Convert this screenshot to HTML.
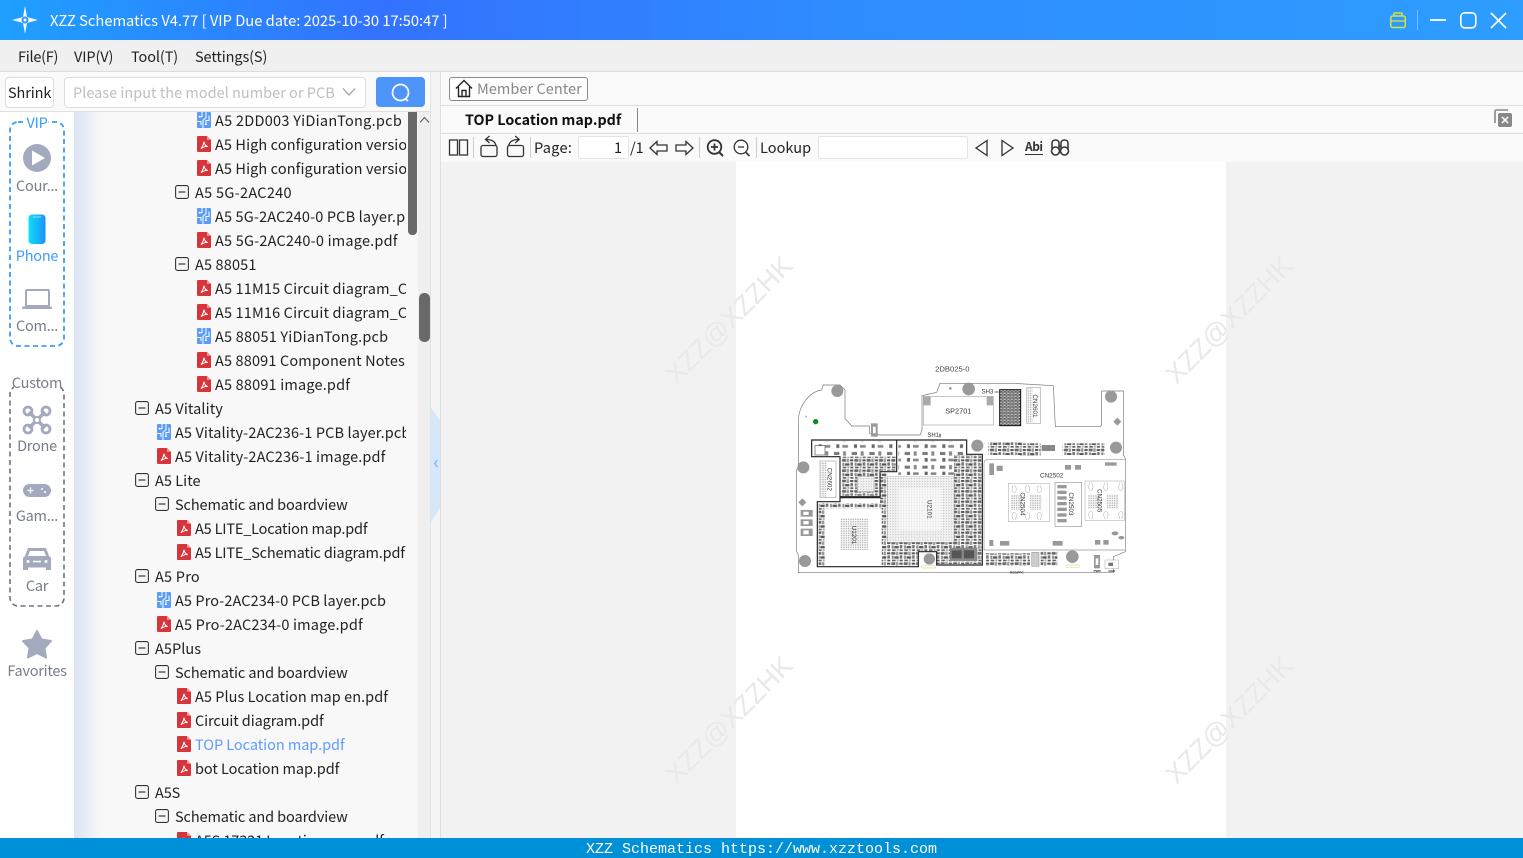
<!DOCTYPE html>
<html><head><meta charset="utf-8"><title>XZZ Schematics</title>
<style>
html,body{margin:0;padding:0;width:1523px;height:858px;overflow:hidden;background:#fff}
body{position:relative;font-family:"Noto Sans CJK SC","Liberation Sans",sans-serif;font-size:14.5px;letter-spacing:-.1px;color:#222}
.a{position:absolute}
.t{position:absolute;white-space:nowrap;line-height:20px}
#title{left:0;top:0;width:1523px;height:40px;background:linear-gradient(90deg,#1fa0ff 0,#3372ff 25%,#2f8cff 55%,#2d9dff 100%)}
#menu{left:0;top:40px;width:1523px;height:31px;background:#f0f0f0;border-bottom:1px solid #dcdcdc}
#tree{left:74px;top:112px;width:332px;height:726px;overflow:hidden;background:linear-gradient(90deg,#dbe4f3 0,#f8f8f8 28px)}
.r{position:absolute;height:24px;line-height:25px;white-space:nowrap;color:#222}
.r svg{position:absolute;top:4px;left:-18px;width:14px;height:16px}
.r svg.b{left:-20px;top:5px;width:14px;height:14px}
.lab{position:absolute;left:0;width:74px;text-align:center;color:#767c8a;line-height:20px;white-space:nowrap;letter-spacing:-.25px}
.wm{position:absolute;font-family:"Liberation Sans",sans-serif;font-size:27px;letter-spacing:0;color:#e9e9e9;white-space:nowrap;transform:translate(-50%,-50%) rotate(-45deg);line-height:34px}
</style></head><body>
<svg width="0" height="0" style="position:absolute">
<defs>
<symbol id="pdf" viewBox="0 0 14 17" preserveAspectRatio="none"><path d="M1 0H10L14 4V16a1 1 0 0 1-1 1H1a1 1 0 0 1-1-1V1a1 1 0 0 1 1-1z" fill="#d8343c"/><path d="M10 0V4H14z" fill="#ee9a9e"/><path d="M7 6c.4 3 1.600 4.500 3.800 5.200-2.800-.2-4.800.4-6.800 2.300 1.500-2.200 2.800-4.500 3-7.500z" fill="none" stroke="#fff" stroke-width="1.100"/></symbol>
<symbol id="pcb" viewBox="0 0 14 17" preserveAspectRatio="none"><rect width="14" height="17" rx="1" fill="#5b9cf8"/><path d="M5 0V5H2M9 0V6L6 9V17M12 4V9H9V13M0 10H4V14" stroke="#fff" fill="none" stroke-width="1"/><circle cx="2.500" cy="5" r="1" fill="#fff"/><circle cx="9" cy="13" r="1" fill="#fff"/></symbol>
<symbol id="box" viewBox="0 0 14 14"><rect x=".6" y=".6" width="12.800" height="12.800" rx="2" fill="none" stroke="#333" stroke-width="1.100"/><path d="M3.500 7H10.500" stroke="#333" stroke-width="1.200"/></symbol>
<pattern id="comp" width="37" height="31" patternUnits="userSpaceOnUse"><rect width="37" height="31" fill="#fff"/><rect x="1" y="2" width="12" height="8" fill="#666"/><rect x="15" y="1" width="7" height="11" fill="#999"/><rect x="25" y="3" width="10" height="6" fill="#555"/><rect x="2" y="13" width="6" height="10" fill="#888"/><rect x="10" y="15" width="13" height="7" fill="#555"/><rect x="26" y="12" width="8" height="10" fill="#777"/><rect x="3" y="25" width="11" height="5" fill="#666"/><rect x="17" y="24" width="6" height="6" fill="#aaa"/><rect x="26" y="25" width="9" height="5" fill="#555"/></pattern>
<pattern id="sparse" width="53" height="41" patternUnits="userSpaceOnUse"><rect width="53" height="41" fill="#fff"/><rect x="3" y="4" width="16" height="9" fill="#777"/><rect x="30" y="2" width="9" height="13" fill="#888"/><rect x="10" y="22" width="9" height="11" fill="#666"/><rect x="28" y="24" width="17" height="8" fill="#888"/></pattern>
<pattern id="dense" width="11" height="9" patternUnits="userSpaceOnUse"><rect width="11" height="9" fill="#999"/><rect x="1" y="1" width="5" height="3" fill="#444"/><rect x="7" y="4" width="3" height="4" fill="#555"/><rect x="1" y="6" width="4" height="2" fill="#ddd"/></pattern>
<pattern id="dots" width="8" height="8" patternUnits="userSpaceOnUse"><rect width="8" height="8" fill="#f4f4f4"/><circle cx="3" cy="3" r="1.800" fill="#b5b5b5"/></pattern>
<pattern id="grid" width="7" height="7" patternUnits="userSpaceOnUse"><rect x="1" y="1" width="4" height="4" fill="#aaa"/></pattern>
</defs></svg>

<!-- title bar -->
<div class="a" id="title"></div>
<svg class="a" style="left:11px;top:6px" width="28" height="28" viewBox="0 0 28 28"><path d="M14 0L16 11L27 14L16 17L14 28L12 17L1 14L12 11z" fill="#fff" opacity=".95"/><circle cx="14" cy="14" r="3.500" fill="#3a93f5"/><circle cx="14" cy="14" r="1.500" fill="#fff"/></svg>
<div class="t" style="left:50px;top:11px;color:#fff;font-size:14.700px;letter-spacing:0">XZZ Schematics V4.77 [ VIP Due date: 2025-10-30 17:50:47 ]</div>
<svg class="a" style="left:1380px;top:0" width="143" height="40" viewBox="1380 0 143 40" fill="none">
<path d="M1394 16V14a1 1 0 0 1 1-1H1401a1 1 0 0 1 1 1V16" stroke="#d8e23c" stroke-width="1.500"/>
<rect x="1390.800" y="16" width="14.500" height="11.500" rx="2" stroke="#d8e23c" stroke-width="1.500"/>
<path d="M1391 21H1405" stroke="#d8e23c" stroke-width="1.300"/>
<path d="M1417.500 10V30" stroke="#7dbfff"/>
<path d="M1430 20H1446" stroke="#fff" stroke-width="1.800"/>
<rect x="1460.800" y="12.800" width="15" height="15" rx="4" stroke="#fff" stroke-width="1.600"/>
<path d="M1491 13L1506 28M1506 13L1491 28" stroke="#fff" stroke-width="1.600"/>
</svg>

<!-- menu -->
<div class="a" id="menu"></div>
<div class="t" style="left:18px;top:47px;letter-spacing:-.25px">File(F)</div>
<div class="t" style="left:74px;top:47px">VIP(V)</div>
<div class="t" style="left:131px;top:47px">Tool(T)</div>
<div class="t" style="left:195px;top:47px">Settings(S)</div>

<!-- left top controls -->
<div class="a" style="left:0;top:72px;width:430px;height:39px;background:#fafafa;border-bottom:1px solid #e0e0e0"></div>
<div class="a" style="left:5px;top:77px;width:47px;height:29px;border:1px solid #dcdcdc;border-radius:4px;background:#fff"></div>
<div class="t" style="left:8px;top:83px;color:#222">Shrink</div>
<div class="a" style="left:64px;top:77px;width:300px;height:29px;border:1px solid #dcdcdc;border-radius:4px;background:#fff"></div>
<div class="t" style="left:73px;top:83px;color:#bfbfbf;letter-spacing:.01px">Please input the model number or PCB</div>
<svg class="a" style="left:342px;top:87px" width="14" height="10" viewBox="0 0 14 10"><path d="M1 1.500L7 8L13 1.500" fill="none" stroke="#aaa" stroke-width="1.300"/></svg>
<div class="a" style="left:376px;top:77px;width:49px;height:30px;border-radius:4px;background:#4d94fb"></div>
<svg class="a" style="left:390px;top:82px" width="22" height="22" viewBox="0 0 22 22" fill="none"><circle cx="10.500" cy="10.500" r="8" stroke="#fff" stroke-width="1.700"/><path d="M15.500 17L18 19" stroke="#fff" stroke-width="1.700"/></svg>

<!-- left nav -->
<div class="a" style="left:0;top:112px;width:74px;height:726px;background:#fff"></div>
<svg class="a" style="left:0;top:112px" width="74" height="726" viewBox="0 112 74 726" fill="none">
<rect x="10" y="122" width="54" height="224" rx="8" stroke="#3a9dfb" stroke-width="1.800" stroke-dasharray="5 3.500"/>
<rect x="10" y="386" width="54" height="220" rx="8" stroke="#6e7483" stroke-width="1.600" stroke-dasharray="5 3.500"/>
<rect x="26" y="119" width="22" height="6" fill="#fff"/>
<rect x="14" y="383" width="46" height="6" fill="#fff"/>
<circle cx="37" cy="158" r="14" fill="#a3aabd"/><path d="M32 150.500L45 158L32 165.500z" fill="#fff"/>
<rect x="28.500" y="214.500" width="17" height="29.500" rx="3.500" fill="url(#ph)"/>
<defs><linearGradient id="ph" x1="0" y1="0" x2="1" y2="0"><stop offset="0" stop-color="#10e0f6"/><stop offset="1" stop-color="#1a90ff"/></linearGradient></defs>
<path d="M33 217H41" stroke="#bff" stroke-width=".7"/>
<rect x="26" y="290" width="23" height="16" rx="1" stroke="#a3aabd" stroke-width="2"/>
<rect x="22" y="306.500" width="30" height="2.500" rx="1" fill="#a3aabd"/>
<g stroke="#a3aabd" stroke-width="3.500"><path d="M29 412L45 428M45 412L29 428"/></g>
<g stroke="#a3aabd" stroke-width="2.800"><circle cx="28" cy="411" r="4"/><circle cx="46" cy="411" r="4"/><circle cx="28" cy="429" r="4"/><circle cx="46" cy="429" r="4"/></g>
<circle cx="37" cy="420" r="3" fill="#fff" stroke="#a3aabd" stroke-width="2"/>
<rect x="23" y="484" width="28" height="13" rx="6.500" fill="#a3aabd"/>
<path d="M27.500 490.500H33.500M30.500 487.500V493.500" stroke="#fff" stroke-width="1.300"/><circle cx="42" cy="489" r="1" fill="#fff"/><circle cx="45" cy="492" r="1" fill="#fff"/>
<path d="M28 548H46L49 556L51 558V570H46V567.500H28V570H23V558L25 556z" fill="#a3aabd"/><path d="M30 551H44L46 556H28z" fill="#fff"/><circle cx="28" cy="561.500" r="1.500" fill="#fff"/><circle cx="46" cy="561.500" r="1.500" fill="#fff"/><path d="M33 561.500H41" stroke="#fff" stroke-width="1.500"/>
<path d="M37 631L41.500 639.500L51 641L44.500 648L46 657.500L37 653L28 657.500L29.500 648L23 641L32.500 639.500z" fill="#a3aabd" stroke="#a3aabd" stroke-width="2" stroke-linejoin="round"/>
</svg>
<div class="lab" style="top:113px;color:#3a9dfb">VIP</div>
<div class="lab" style="top:176px">Cour...</div>
<div class="lab" style="top:246px;color:#3d9eff">Phone</div>
<div class="lab" style="top:316px">Com...</div>
<div class="lab" style="top:373px">Custom</div>
<div class="lab" style="top:436px">Drone</div>
<div class="lab" style="top:506px">Gam...</div>
<div class="lab" style="top:576px">Car</div>
<div class="lab" style="top:661px">Favorites</div>

<!-- tree -->
<div class="a" id="tree">
<div class="r" style="top:-4px;left:141px;letter-spacing:.27px"><svg><use href="#pcb"/></svg>A5 2DD003 YiDianTong.pcb</div>
<div class="r" style="top:20px;left:141px;letter-spacing:.1px"><svg><use href="#pdf"/></svg>A5 High configuration version</div>
<div class="r" style="top:44px;left:141px;letter-spacing:.1px"><svg><use href="#pdf"/></svg>A5 High configuration version</div>
<div class="r" style="top:68px;left:121px;letter-spacing:.3px"><svg class="b"><use href="#box"/></svg>A5 5G-2AC240</div>
<div class="r" style="top:92px;left:141px;letter-spacing:.15px"><svg><use href="#pcb"/></svg>A5 5G-2AC240-0 PCB layer.pcb</div>
<div class="r" style="top:116px;left:141px;letter-spacing:.2px"><svg><use href="#pdf"/></svg>A5 5G-2AC240-0 image.pdf</div>
<div class="r" style="top:140px;left:121px;letter-spacing:.15px"><svg class="b"><use href="#box"/></svg>A5 88051</div>
<div class="r" style="top:164px;left:141px;letter-spacing:.15px"><svg><use href="#pdf"/></svg>A5 11M15 Circuit diagram_Chinese</div>
<div class="r" style="top:188px;left:141px;letter-spacing:.15px"><svg><use href="#pdf"/></svg>A5 11M16 Circuit diagram_Chinese</div>
<div class="r" style="top:212px;left:141px;letter-spacing:.2px"><svg><use href="#pcb"/></svg>A5 88051 YiDianTong.pcb</div>
<div class="r" style="top:236px;left:141px;letter-spacing:.15px"><svg><use href="#pdf"/></svg>A5 88091 Component Notes.pdf</div>
<div class="r" style="top:260px;left:141px;letter-spacing:.18px"><svg><use href="#pdf"/></svg>A5 88091 image.pdf</div>
<div class="r" style="top:284px;left:81px;letter-spacing:.1px"><svg class="b"><use href="#box"/></svg>A5 Vitality</div>
<div class="r" style="top:308px;left:101px;letter-spacing:.12px"><svg><use href="#pcb"/></svg>A5 Vitality-2AC236-1 PCB layer.pcb</div>
<div class="r" style="top:332px;left:101px;letter-spacing:.13px"><svg><use href="#pdf"/></svg>A5 Vitality-2AC236-1 image.pdf</div>
<div class="r" style="top:356px;left:81px;letter-spacing:.05px"><svg class="b"><use href="#box"/></svg>A5 Lite</div>
<div class="r" style="top:380px;left:101px"><svg class="b"><use href="#box"/></svg>Schematic and boardview</div>
<div class="r" style="top:404px;left:121px;letter-spacing:-.18px"><svg><use href="#pdf"/></svg>A5 LITE_Location map.pdf</div>
<div class="r" style="top:428px;left:121px;letter-spacing:-.17px"><svg><use href="#pdf"/></svg>A5 LITE_Schematic diagram.pdf</div>
<div class="r" style="top:452px;left:81px;letter-spacing:.23px"><svg class="b"><use href="#box"/></svg>A5 Pro</div>
<div class="r" style="top:476px;left:101px;letter-spacing:.1px"><svg><use href="#pcb"/></svg>A5 Pro-2AC234-0 PCB layer.pcb</div>
<div class="r" style="top:500px;left:101px;letter-spacing:.18px"><svg><use href="#pdf"/></svg>A5 Pro-2AC234-0 image.pdf</div>
<div class="r" style="top:524px;left:81px;letter-spacing:.05px"><svg class="b"><use href="#box"/></svg>A5Plus</div>
<div class="r" style="top:548px;left:101px"><svg class="b"><use href="#box"/></svg>Schematic and boardview</div>
<div class="r" style="top:572px;left:121px;letter-spacing:.05px"><svg><use href="#pdf"/></svg>A5 Plus Location map en.pdf</div>
<div class="r" style="top:596px;left:121px"><svg><use href="#pdf"/></svg>Circuit diagram.pdf</div>
<div class="r" style="top:620px;left:121px;color:#5f9bff;letter-spacing:-.05px"><svg><use href="#pdf"/></svg>TOP Location map.pdf</div>
<div class="r" style="top:644px;left:121px;letter-spacing:-.05px"><svg><use href="#pdf"/></svg>bot Location map.pdf</div>
<div class="r" style="top:668px;left:81px"><svg class="b"><use href="#box"/></svg>A5S</div>
<div class="r" style="top:692px;left:101px"><svg class="b"><use href="#box"/></svg>Schematic and boardview</div>
<div class="r" style="top:716px;left:121px"><svg><use href="#pdf"/></svg>A5S 17321 Location map.pdf</div>
</div>
<div class="a" style="left:406px;top:112px;width:12px;height:726px;background:#f8f8f8"></div>
<div class="a" style="left:408px;top:112px;width:9px;height:123px;background:#696969;border-radius:0 0 4px 4px"></div>
<div class="a" style="left:418px;top:112px;width:12px;height:726px;background:#efefef"></div>
<svg class="a" style="left:419px;top:116px" width="11" height="8" viewBox="0 0 11 8"><path d="M1 6.500L5.500 1.500L10 6.500" fill="none" stroke="#555" stroke-width="1"/></svg>
<div class="a" style="left:419px;top:293px;width:11px;height:49px;background:#696969;border-radius:5px"></div>
<div class="a" style="left:430px;top:72px;width:1px;height:766px;background:#e0e4e0"></div>
<div class="a" style="left:431px;top:72px;width:10px;height:766px;background:#f4f4f4;border-right:1px solid #e0e0e0;box-sizing:border-box"></div>
<svg class="a" style="left:431px;top:408px" width="10" height="114" viewBox="0 0 10 114"><path d="M0 0L9 12V100L0 114z" fill="#d5e8fb"/><path d="M6.500 52L3.500 55.500L6.500 59" fill="none" stroke="#7db2ee" stroke-width="1.200"/></svg>

<!-- right -->
<div class="a" style="left:441px;top:72px;width:1082px;height:33px;background:#fafafa;border-bottom:1px solid #dcdcdc"></div>
<div class="a" style="left:449px;top:77px;width:137px;height:22px;border:1px solid #8a8a8a;border-radius:3px;background:#fdfdfd"></div>
<svg class="a" style="left:455px;top:79px" width="18" height="19" viewBox="0 0 18 19" fill="none" stroke="#222" stroke-width="1.400"><path d="M1 9.500L9 1.500L17 9.500M3.500 8V17.500H14.500V8M7 17.500V11.500H11V17.500"/></svg>
<div class="t" style="left:477px;top:79px;color:#888;letter-spacing:.05px">Member Center</div>
<div class="a" style="left:441px;top:106px;width:1082px;height:27px;background:#fafafa;border-bottom:1px solid #dcdcdc"></div>
<div class="t" style="left:465px;top:110px;font-weight:700;color:#111;font-size:14.300px;letter-spacing:0">TOP Location map.pdf</div>
<div class="a" style="left:637px;top:108px;width:1px;height:24px;background:#888"></div>
<svg class="a" style="left:1494px;top:109px" width="19" height="19" viewBox="0 0 19 19"><path d="M1 14V2.500a1.500 1.500 0 0 1 1.500-1.500H14" fill="none" stroke="#888" stroke-width="1.600"/><rect x="4" y="4" width="14" height="14" rx="2" fill="#888"/><path d="M8 8L14 14M14 8L8 14" stroke="#fff" stroke-width="1.500"/></svg>
<div class="a" style="left:441px;top:134px;width:1082px;height:28px;background:#fafafa"></div>
<svg class="a" style="left:441px;top:134px" width="640" height="28" viewBox="441 134 640 28" fill="none" stroke="#333" stroke-width="1.300">
<rect x="449.500" y="140" width="8" height="15"/><rect x="459.500" y="140" width="8" height="15"/>
<path d="M473.500 137V158M530.500 137V158M699.500 137V158M756.500 137V158" stroke="#ccc" stroke-width="1"/>
<rect x="481" y="145.500" width="16" height="11" rx="2"/><path d="M496 145.500C495 141 491 139.500 486 139.500M489.500 136L485.500 139.500L489.500 143"/>
<rect x="507.500" y="145.500" width="16" height="11" rx="2"/><path d="M508.700 145.500C509.700 141 513.700 139.500 518.700 139.500M515.200 136L519.200 139.500L515.200 143"/>
<path d="M650 148L657 141.500V145H667V151H657V154.500z"/>
<path d="M693 148L686 141.500V145H676V151H686V154.500z"/>
<circle cx="714.500" cy="147" r="6.800" stroke-width="1.800"/><path d="M719.500 152.500L723 156" stroke-width="2"/><path d="M711 147H718M714.500 143.500V150.500" stroke-width="1.800"/>
<circle cx="741" cy="147" r="6.800"/><path d="M746 152.500L749.500 156" stroke-width="1.600"/><path d="M738 147H744"/>
<path d="M987 140.500L976 148L987 155.500z"/>
<path d="M1002 140.500L1013 148L1002 155.500z"/>
<path d="M1025 154.500H1043" stroke-width="1"/>
<path d="M1052 150V143C1052 139 1059 139 1059 143V150M1061 150V143C1061 139 1068 139 1068 143V150M1059 146H1061" stroke-width="1.500"/>
<circle cx="1055.500" cy="151" r="4" stroke-width="1.500"/><circle cx="1064.500" cy="151" r="4" stroke-width="1.500"/>
</svg>
<div class="t" style="left:534px;top:138px;letter-spacing:.3px">Page:</div>
<div class="a" style="left:578px;top:136px;width:49px;height:21px;background:#fff;border:1px solid #e4e4e4;border-radius:2px"></div>
<div class="t" style="left:614px;top:138px">1</div>
<div class="t" style="left:630px;top:138px">/1</div>
<div class="t" style="left:760px;top:138px;letter-spacing:.05px">Lookup</div>
<div class="a" style="left:818px;top:136px;width:148px;height:21px;background:#fff;border:1px solid #e4e4e4;border-radius:2px"></div>
<div class="t" style="left:1025px;top:140px;font-size:12px;font-weight:700;line-height:14px;letter-spacing:-.5px;color:#333">Abi</div>

<div class="a" style="left:441px;top:162px;width:1082px;height:676px;background:#f2f2f2;overflow:hidden">
<div class="a" style="left:295px;top:0;width:490px;height:676px;background:#fff"></div>
<div class="wm" style="left:288px;top:158px">XZZ@XZZHK</div>
<div class="wm" style="left:788px;top:158px">XZZ@XZZHK</div>
<div class="wm" style="left:288px;top:558px">XZZ@XZZHK</div>
<div class="wm" style="left:788px;top:558px">XZZ@XZZHK</div>
</div>

<!-- PCB -->
<svg class="a" style="left:780px;top:355px" width="360" height="225" viewBox="0 0 1080 675" font-family="Liberation Sans,sans-serif" fill="none" letter-spacing="0">
<path d="M55 650V600L50 590V345L55 335V200C55 150 90 110 125 105L130 90H180L195 105V190L215 213H268V235L300 240H420L426 225V122L470 112L480 85H700L820 92L826 215H960L965 210V108H1030V300L1036 310V590L1000 605V650L1000 653H55z" stroke="#777" stroke-width="2"/>
<g fill="#999"><circle cx="172" cy="108" r="18"/><circle cx="566" cy="102" r="19"/><circle cx="993" cy="125" r="18"/><circle cx="1008" cy="278" r="18"/><circle cx="592" cy="272" r="18"/><circle cx="70" cy="337" r="18"/><circle cx="75" cy="618" r="18"/><circle cx="877" cy="605" r="19"/></g>
<circle cx="107" cy="200" r="8" fill="#0a8a1e"/><circle cx="78" cy="185" r="3" fill="#bbb"/><circle cx="511" cy="100" r="4" fill="#999"/>
<text x="517" y="49" font-size="23" fill="#444" text-anchor="middle">2DB025-0</text>
<rect x="430" y="124" width="210" height="86" stroke="#aaa" stroke-width="2"/>
<rect x="430" y="125" width="22" height="26" fill="#aaa"/><rect x="620" y="125" width="20" height="26" fill="#aaa"/>
<text x="535" y="176" font-size="22" fill="#333" text-anchor="middle">SP2701</text>
<text x="605" y="116" font-size="18" fill="#333">SH3</text><path d="M644 111H656" stroke="#222" stroke-width="2"/>
<rect x="659" y="104" width="63" height="108" fill="url(#dense)" stroke="#111" stroke-width="3"/>
<rect x="740" y="98" width="42" height="107" fill="#fff" stroke="#aaa" stroke-width="2"/>
<rect x="741" y="100" width="17" height="103" fill="url(#grid)"/>
<text font-size="19" fill="#333" transform="translate(759,118) rotate(90)">CN2601</text>
<rect x="273" y="205" width="20" height="40" fill="#999"/><rect x="279" y="215" width="8" height="20" fill="#fff"/>
<path d="M1000 200L1012 188L1024 200L1012 212z" fill="#999"/><path d="M55 442L67 430L79 442L67 454z" fill="#999"/>
<text x="442" y="246" font-size="18" fill="#333">SH1</text><path d="M480 236V247" stroke="#222" stroke-width="3"/>
<!-- shields -->
<path d="M112 440H180V428H300V350H350V255H560V298H607V630H470V590H415V635H112z" fill="#fff"/>
<path d="M95 255H350V350H300V425H180V305H95z" fill="#fff"/>
<rect x="100" y="260" width="245" height="44" fill="url(#sparse)"/>
<rect x="185" y="305" width="112" height="117" fill="url(#comp)"/>
<rect x="297" y="305" width="50" height="42" fill="url(#comp)"/>
<rect x="355" y="260" width="200" height="100" fill="url(#sparse)"/>
<rect x="300" y="355" width="22" height="210" fill="url(#comp)"/>
<rect x="522" y="300" width="82" height="275" fill="url(#comp)"/>
<rect x="116" y="444" width="20" height="188" fill="url(#comp)"/>
<rect x="136" y="444" width="170" height="16" fill="url(#comp)"/>
<rect x="305" y="562" width="217" height="28" fill="url(#comp)"/>
<rect x="305" y="590" width="108" height="42" fill="url(#comp)"/>
<rect x="470" y="575" width="134" height="52" fill="url(#comp)"/>
<path d="M95 255H350V350H300V425H180V305H95zM350 255H560V298H607V630H470V590H415V635H112V440H180V428H300V350" stroke="#222" stroke-width="3.500"/>
<rect x="105" y="272" width="30" height="28" fill="#fff" stroke="#555" stroke-width="2"/>
<rect x="232" y="365" width="50" height="45" fill="url(#dots)" stroke="#666"/>
<rect x="120" y="318" width="48" height="110" fill="#fff" stroke="#aaa" stroke-width="2"/><rect x="122" y="320" width="18" height="105" fill="url(#grid)"/>
<text font-size="19" fill="#333" transform="translate(142,338) rotate(90)">CN2602</text>
<rect x="135" y="460" width="170" height="155" fill="#fff"/><rect x="180" y="490" width="85" height="95" fill="url(#grid)"/>
<text font-size="19" fill="#333" transform="translate(216,512) rotate(90)">U1201</text>
<rect x="322" y="365" width="200" height="197" fill="url(#dots)" stroke="#888"/>
<rect x="355" y="400" width="130" height="125" fill="#fff" opacity=".45"/>
<text font-size="19" fill="#333" transform="translate(443,435) rotate(90)">U2101</text>
<rect x="510" y="578" width="82" height="40" fill="#888"/><rect x="515" y="586" width="30" height="24" fill="#555"/><rect x="552" y="586" width="30" height="24" fill="#555"/>
<circle cx="448" cy="612" r="17" fill="#999"/>
<rect x="425" y="632" width="42" height="7" rx="3" stroke="#e8d9a0" stroke-width="2"/>
<rect x="858" y="630" width="40" height="7" rx="3" stroke="#e8d9a0" stroke-width="2"/>
<!-- left small -->
<g fill="#999"><rect x="62" y="465" width="36" height="20"/><rect x="62" y="493" width="36" height="20"/><rect x="62" y="521" width="36" height="22"/></g>
<g fill="#fff"><rect x="70" y="470" width="16" height="10"/><rect x="70" y="498" width="16" height="10"/><rect x="70" y="526" width="16" height="12"/></g>
<!-- mid row -->
<rect x="625" y="262" width="100" height="38" fill="url(#comp)"/><rect x="720" y="265" width="62" height="38" fill="url(#comp)"/><rect x="785" y="270" width="40" height="18" fill="#888"/>
<rect x="848" y="265" width="125" height="35" fill="url(#comp)"/>
<!-- CN2502 -->
<path d="M612 325Q612 313 625 313H1036V585H612z" stroke="#999" stroke-width="2" fill="#fff"/>
<g fill="#999"><rect x="628" y="325" width="14" height="35"/><rect x="650" y="332" width="18" height="16"/><rect x="855" y="330" width="18" height="14"/><rect x="885" y="330" width="18" height="14"/><rect x="975" y="322" width="35" height="10"/><rect x="628" y="555" width="12" height="18"/><rect x="660" y="558" width="28" height="14"/><rect x="818" y="558" width="30" height="14"/><rect x="945" y="555" width="16" height="14"/><rect x="970" y="555" width="16" height="14"/></g>
<ellipse cx="1005" cy="535" rx="10" ry="6" fill="#999"/><ellipse cx="1024" cy="548" rx="9" ry="5" fill="#999"/>
<text x="815" y="368" font-size="19" fill="#333" text-anchor="middle">CN2502</text>
<rect x="685" y="385" width="123" height="115" fill="#fff" stroke="#bbb" stroke-width="2"/>
<rect x="692" y="420" width="35" height="45" fill="url(#grid)"/><rect x="750" y="420" width="35" height="45" fill="url(#grid)"/>
<path d="M700 390C685 420 720 420 705 390M740 390C725 420 760 420 745 390M775 390C760 420 795 420 780 390M700 495C685 465 720 465 705 495M740 495C725 465 760 465 745 495M775 495C760 465 795 465 780 495" stroke="#aaa" stroke-width="1.500"/>
<text font-size="19" fill="#333" transform="translate(722,412) rotate(90)">CN2504</text>
<rect x="825" y="382" width="80" height="132" fill="#fff" stroke="#999" stroke-width="2"/>
<g fill="#999"><rect x="832" y="390" width="28" height="10"/><rect x="832" y="407" width="28" height="10"/><rect x="832" y="424" width="28" height="10"/><rect x="832" y="441" width="28" height="10"/><rect x="832" y="458" width="28" height="10"/><rect x="832" y="475" width="28" height="10"/><rect x="832" y="492" width="28" height="10"/></g>
<text font-size="19" fill="#333" transform="translate(867,412) rotate(90)">CN2503</text>
<rect x="915" y="378" width="118" height="118" fill="#fff" stroke="#bbb" stroke-width="2"/>
<rect x="925" y="418" width="35" height="42" fill="url(#grid)"/><rect x="980" y="418" width="35" height="42" fill="url(#grid)"/>
<path d="M930 382C915 415 950 415 935 382M975 382C960 415 995 415 980 382M1020 382C1005 415 1040 415 1025 382M930 492C915 462 950 462 935 492M975 492C960 462 995 462 980 492M1020 492C1005 462 1040 462 1025 492" stroke="#aaa" stroke-width="1.500"/>
<text font-size="19" fill="#333" transform="translate(952,402) rotate(90)">CN2505</text>
<!-- bottom -->
<rect x="618" y="595" width="132" height="38" fill="url(#comp)"/><rect x="755" y="592" width="22" height="42" fill="#ccc" stroke="#666"/><rect x="782" y="590" width="50" height="42" fill="url(#comp)"/>
<rect x="942" y="600" width="18" height="40" fill="#999"/><rect x="947" y="610" width="8" height="20" fill="#fff"/>
<rect x="975" y="615" width="40" height="26" fill="#fff" stroke="#777"/><rect x="985" y="623" width="14" height="10" fill="#777"/>
<text x="690" y="656" font-size="9" fill="#222" font-weight="700">RGB/PPC</text>
<text x="941" y="651" font-size="9" fill="#222" font-weight="700">PWR</text><text x="985" y="651" font-size="9" fill="#222" font-weight="700">GND</text>
</svg>

<!-- status bar -->
<div class="a" style="left:0;top:838px;width:1523px;height:20px;background:#0090d8"></div>
<div class="t" style="left:0;top:840px;width:1523px;text-align:center;color:#fff;font-family:'Liberation Mono',monospace;font-size:15px;letter-spacing:0;font-weight:400">XZZ Schematics https://www.xzztools.com</div>
</body></html>
